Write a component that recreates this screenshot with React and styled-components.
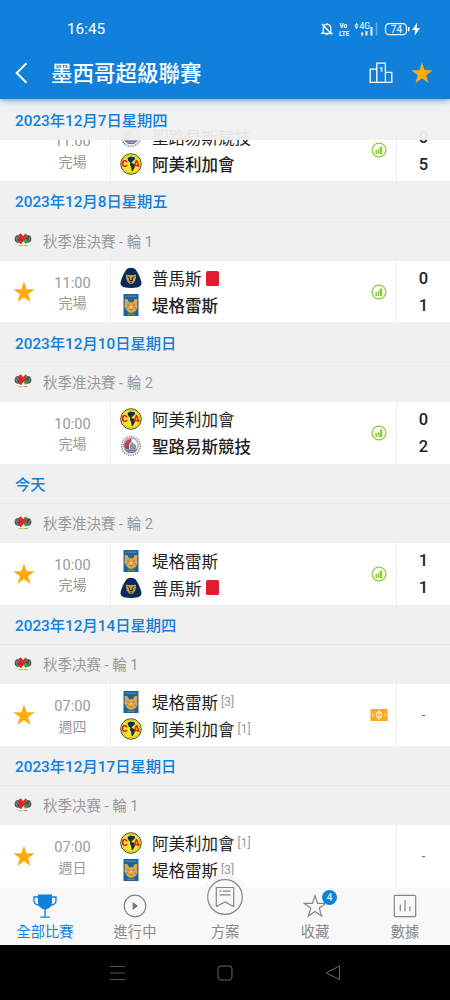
import React from 'react'
import styled, { createGlobalStyle } from 'styled-components'

const days = [
    {
        id: 1, title: '2023年12月8日星期五', league: '秋季准決賽 - 輪 1',
        match: { star: true, time: '11:00', state: '完場', stats: true,
            teams: [{ crest: 'pumas', name: '普馬斯', red: true, score: 0 }, { crest: 'tigres', name: '堤格雷斯', win: true, score: 1 }] }
    },
    {
        id: 2, title: '2023年12月10日星期日', league: '秋季准決賽 - 輪 2',
        match: { time: '10:00', state: '完場', stats: true,
            teams: [{ crest: 'america', name: '阿美利加會', score: 0 }, { crest: 'sanluis', name: '聖路易斯競技', win: true, score: 2 }] }
    },
    {
        id: 3, title: '今天', league: '秋季准決賽 - 輪 2',
        match: { star: true, time: '10:00', state: '完場', stats: true,
            teams: [{ crest: 'tigres', name: '堤格雷斯', score: 1 }, { crest: 'pumas', name: '普馬斯', red: true, score: 1 }] }
    },
    {
        id: 4, title: '2023年12月14日星期四', league: '秋季决赛 - 輪 1',
        match: { star: true, time: '07:00', state: '週四', preview: true,
            teams: [{ crest: 'tigres', name: '堤格雷斯', rank: 3 }, { crest: 'america', name: '阿美利加會', rank: 1 }] }
    },
    {
        id: 5, title: '2023年12月17日星期日', league: '秋季决赛 - 輪 1',
        match: { star: true, time: '07:00', state: '週日',
            teams: [{ crest: 'america', name: '阿美利加會', rank: 1 }, { crest: 'tigres', name: '堤格雷斯', rank: 3 }] }
    },
]

const firstMatch = { time: '11:00', state: '完場', stats: true,
    teams: [{ crest: 'sanluis', name: '聖路易斯競技', score: 0 }, { crest: 'america', name: '阿美利加會', win: true, score: 5 }] }

function Star({ size }) {
    return (
        <svg width={size} height={size} viewBox="0 0 22 22">
            <path fill="#ffab0f" d="M11 .6l2.6 7.6 8 .1-6.4 4.900 2.300 7.700L11 16.300l-6.500 4.600 2.300-7.700L.4 8.300l8-.1z" />
        </svg>
    )
}

function Crest({ kind }) {
    if (kind === 'pumas') {
        return (
            <svg width="22" height="22" viewBox="0 0 22 22">
                <path fill="#08295a" d="M11 .8c2.700 0 4.300 1.200 5.600 3.200 1.900 3 3.500 6.500 4.600 10.200.9 3-.4 5.300-3.200 6-4.600 1-9.400 1-14 0-2.800-.7-4.100-3-3.200-6C1.900 10.500 3.500 7 5.400 4 6.700 2 8.300.8 11 .8z" />
                <path fill="#c9a13b" d="M6.200 7.600l2.300.5h5l2.300-.5.2 3-1 3.500-2.300 2.600h-3.400L7 14.100l-1-3.500z" />
                <path fill="none" stroke="#08295a" strokeWidth="1" d="M7.600 9.700l2 1.200v2.600h2.800v-2.600l2-1.200M9.800 15.200h2.400" />
            </svg>
        )
    }
    if (kind === 'tigres') {
        return (
            <svg width="22" height="22" viewBox="0 0 22 22">
                <rect x="3.500" width="15" height="22" fill="#17649f" />
                <path stroke="#5d8aa0" strokeWidth="1.600" strokeDasharray="1.600 .7" d="M5.200 2.300h12" />
                <path fill="#e9a541" d="M4.600 5l3 .2 1.200 3h4.400l1.200-3 3-.2-.3 5.400.6 2.800-1.700 3.600-3.200 1.900H9.200L6 15.800l-1.700-3.600.6-2.800z" />
                <path fill="none" stroke="#17649f" strokeWidth=".6" d="M7 10.500l2.500 1.200M15 10.500l-2.500 1.200M5.500 14.300l2.200-.3M16.500 14.300l-2.200-.3M9.400 15.400q1.600 1.400 3.200 0" />
                <path fill="#f6dba0" d="M9.500 12.200h3L11 14.500z" />
                <path stroke="#b8a765" strokeWidth="1" strokeDasharray="1.300 .6" d="M7.500 20.300h7" />
            </svg>
        )
    }
    if (kind === 'america') {
        return (
            <svg width="22" height="22" viewBox="0 0 22 22">
                <circle cx="11" cy="11" r="10.300" fill="#f5e625" stroke="#4c552f" strokeWidth="1" />
                <circle cx="11" cy="11" r="8.800" fill="none" stroke="#b9b52f" strokeWidth=".5" />
                <path fill="#0b3155" d="M7.500 5l2.800-1.500 4.300.7.500 1.900-2.400 2.100-1.300 1.800 1.900.6 1.900 1.600-.6 2.300-1.900 3.700-1-.4-.6-3.700-1.200-2.400.5-1.800L8.400 8z" />
                <CrestText x="1.500" y="14.200">C</CrestText>
                <CrestText x="13.300" y="14.200">A</CrestText>
            </svg>
        )
    }
    return (
        <svg width="22" height="22" viewBox="0 0 22 22">
            <circle cx="11" cy="11" r="9.300" fill="#fff" stroke="#8a8fab" strokeWidth="1.700" strokeDasharray="1.300 1" />
            <circle cx="11" cy="10.500" r="7.300" fill="#fff" stroke="#8b5a72" strokeWidth=".8" />
            <path fill="#b7454c" d="M4.300 12A6.800 6.800 0 0 1 11.500 4v2.500L9.300 9v5H5.500z" />
            <path fill="#8b93b3" d="M12 6.300l1.500 2.500 2.200.8.900 4.400H10v-4z" />
            <path stroke="#3d4b7d" strokeWidth="1.200" d="M5.500 15.200h11M7.500 17h7" />
        </svg>
    )
}

function LeagueLogo() {
    return (
        <svg width="18" height="16" viewBox="0 0 18 16">
            <circle cx="4.500" cy="6.800" r="3.900" fill="#505050" />
            <circle cx="13.500" cy="6.800" r="3.900" fill="#505050" />
            <path stroke="#aaa" strokeWidth=".7" d="M1.500 4.500l2 5M3.500 4l1 3M16.500 4.500l-2 5" />
            <path stroke="#23ad46" strokeWidth="3.400" d="M12.700 2.400L9.600 6.300l3.200 4.600" fill="none" />
            <path stroke="#ee2229" strokeWidth="3.600" d="M5.300 2.400l3.800 4.200-3.600 4.400" fill="none" />
            <path stroke="#ee2229" strokeWidth="2.400" d="M7.500 8.800l4.500-5.600" />
            <path stroke="#b9cc37" strokeWidth="1" d="M4.500 13.600h5" />
            <path stroke="#e78b84" strokeWidth="1" d="M10 13.600h4" />
        </svg>
    )
}

function Match({ data, first }) {
    return (
        <MatchRow $first={first}>
            <StarCell>{data.star && <Star size={22} />}</StarCell>
            <TimeCell>
                <Time>{data.time}</Time>
                <State>{data.state}</State>
            </TimeCell>
            <Teams>
                {data.teams.map((team) => (
                    <Team key={team.crest} $win={team.win}>
                        <Crest kind={team.crest} />
                        <span>{team.name}</span>
                        {team.red && <RedCard />}
                        {team.rank && <Rank>[{team.rank}]</Rank>}
                    </Team>
                ))}
            </Teams>
            <Extra>
                {data.stats && (
                    <svg width="16" height="16" viewBox="0 0 16 16">
                        <circle cx="8" cy="8" r="6.900" fill="none" stroke="#8ccb3c" strokeWidth="1.300" />
                        <path fill="#8ccb3c" d="M4.400 8h1.900v4H4.400zM7 6.800h1.500V12H7zM9 4.500h2.300V12H9z" />
                    </svg>
                )}
                {data.preview && (
                    <svg width="18" height="14" viewBox="0 0 18 14">
                        <rect x=".5" y="1" width="17" height="12" rx=".8" fill="#fba81a" />
                        <ellipse cx="9" cy="7" rx="2.700" ry="2.900" fill="none" stroke="#fff3d6" strokeWidth="1.200" />
                        <path stroke="#fff3d6" strokeWidth="1" d="M9 2v10M2.800 5.200v3.600M15.200 5.200v3.600" />
                    </svg>
                )}
            </Extra>
            <Scores>
                {data.teams[0].score === undefined ? <Dash>-</Dash> : data.teams.map((team) => <Score key={team.crest}>{team.score}</Score>)}
            </Scores>
        </MatchRow>
    )
}

function StatusBar() {
    return (
        <Status>
            <Clock>16:45</Clock>
            <svg width="104" height="16" viewBox="0 0 104 16" fill="none" stroke="#fff">
                <path strokeWidth="1.200" d="M3.200 11V7.300C3.200 4.800 4.700 3.300 7 3.300s3.800 1.500 3.800 4V11l1 1.300H2zM7 2v1.300M5.700 13.500h2.600M2 3l10 10.500" />
                {/* VoLTE mark, two lines */}
                <SignalText x="19.500" y="7">Vo</SignalText>
                <SignalText x="19" y="14.500" textLength="10.500" lengthAdjust="spacingAndGlyphs">LTE</SignalText>
                <path fill="#fff" stroke="none" d="M36.500 2l1.900 2.400h-3.800zM36.500 8l1.900-2.400h-3.800z" />
                <SignalText x="39.500" y="7.800" $thin>4G</SignalText>
                <path strokeWidth="1.900" d="M42.200 11.500v3M46.500 10v4.500M51.500 6v8.500" />
                <path strokeWidth="1.500" opacity=".35" d="M56.500 1.500v13" />
                <rect x="65.500" y="2.600" width="21" height="11" rx="3.700" strokeWidth="1.200" />
                <path strokeWidth="1.600" d="M88.700 6v4.300" />
                <SignalText x="70.800" y="11.600" $battery>74</SignalText>
                <path fill="#fff" stroke="none" d="M97.300 1.500L92 9h3.300l-.7 5.800L100 7h-3.400z" />
            </svg>
        </Status>
    )
}

function App() {
    return (
        <Phone>
            <GlobalStyle />
            <Top>
                <StatusBar />
                <TitleBar>
                    <svg width="14" height="22" viewBox="0 0 14 22">
                        <path fill="none" stroke="#fff" strokeWidth="1.900" d="M12.500 1.300L2.700 11l9.800 9.700" />
                    </svg>
                    <h1>墨西哥超級聯賽</h1>
                    <svg width="24" height="22" viewBox="0 0 24 22" fill="none" stroke="#fff" strokeWidth="1.300">
                        <path d="M7.800 20.300V1.200h8.600v19.100M7.800 7.200H1.200v13.100h21.600V10.300h-6.400" />
                        <PodiumText x="10" y="9.700">1</PodiumText>
                    </svg>
                    <Star size={22} />
                </TitleBar>
            </Top>

            <List>
                <DateBar $sticky>2023年12月7日星期四</DateBar>
                <Match data={firstMatch} first />
                {days.map((day) => (
                    <section key={day.id}>
                        <DateBar>{day.title}</DateBar>
                        <League>
                            <LeagueLogo />
                            {day.league}
                        </League>
                        <Match data={day.match} />
                    </section>
                ))}
            </List>

            <Tabs>
                <Tab $active>
                    <TabIcon>
                        <svg width="24" height="26" viewBox="0 0 24 26">
                            <path fill="#1180db" d="M5 1.500h14V9c0 4.300-3 7.300-7 7.300S5 13.300 5 9z" />
                            <path fill="none" stroke="#1180db" strokeWidth="1.300" d="M5 4H1v3.500c0 2.600 1.600 4.200 5 4.500M19 4h4v3.500c0 2.600-1.600 4.200-5 4.500M12 16v8M7.300 24.200h9.400" />
                        </svg>
                    </TabIcon>
                    全部比賽
                </Tab>
                <Tab>
                    <TabIcon>
                        <svg width="24" height="24" viewBox="0 0 24 24">
                            <circle cx="12" cy="12" r="10.800" fill="none" stroke="#858585" strokeWidth="1.200" />
                            <path fill="#777" d="M9.700 8l5.300 4-5.300 4z" />
                        </svg>
                    </TabIcon>
                    進行中
                </Tab>
                <Tab>
                    <TabIcon>
                        <Bump>
                            <svg width="38" height="38" viewBox="0 0 38 38" fill="none" stroke="#858585" strokeWidth="1.200">
                                <circle cx="19" cy="19" r="17.300" />
                                <path d="M10.300 9.500h17.400v19L19 24l-8.700 4.500zM13.500 13.200h2.200M17 13.200h7.500M13.500 16.800h11" />
                            </svg>
                        </Bump>
                    </TabIcon>
                    方案
                </Tab>
                <Tab>
                    <TabIcon>
                        <svg width="24" height="24" viewBox="0 0 24 24">
                            <path fill="none" stroke="#858585" strokeWidth="1.200" d="M12 1.800l2.600 7.500 8.100.1-6.500 4.900 2.400 7.800-6.600-4.700-6.600 4.700 2.400-7.800-6.500-4.900 8.100-.1z" />
                        </svg>
                        <Badge>4</Badge>
                    </TabIcon>
                    收藏
                </Tab>
                <Tab>
                    <TabIcon>
                        <svg width="24" height="24" viewBox="0 0 24 24" fill="none" stroke="#858585" strokeWidth="1.200">
                            <rect x="1.300" y="1.300" width="21.400" height="21.400" rx="1" />
                            <path d="M7.300 10.500v6.700M12 6v11.200M16.900 12.500v4.700" />
                        </svg>
                    </TabIcon>
                    數據
                </Tab>
            </Tabs>

            <SystemNav>
                <svg width="18" height="16" viewBox="0 0 18 16"><path stroke="#555" d="M2 1.500h15M2 8h15M2 14.500h15" /></svg>
                <svg width="18" height="18" viewBox="0 0 18 18"><rect x="2" y="2" width="14" height="14" rx="3" fill="none" stroke="#666" /></svg>
                <svg width="18" height="18" viewBox="0 0 18 18"><path fill="none" stroke="#666" strokeLinejoin="round" d="M15.500 2v13.500L2 8.800z" /></svg>
            </SystemNav>
        </Phone>
    )
}

export default App

const GlobalStyle = createGlobalStyle`
    *{
        box-sizing: border-box;
    }
    body{
        margin: 0;
        background: #000;
        font-family: Roboto, 'Noto Sans CJK TC', sans-serif;
    }
    svg{
        display: block;
        flex-shrink: 0;
    }
`

const Phone = styled.div`
    width: 450px;
    height: 1000px;
    display: flex;
    flex-direction: column;
    overflow: hidden;
`

const Top = styled.header`
    height: 99px;
    flex-shrink: 0;
    background: #1180db;
    box-shadow: 0 1px 6px rgba(17, 128, 219, 0.75);
    position: relative;
    z-index: 5;
`

const Status = styled.div`
    height: 50px;
    padding: 8px 26px 0 67px;
    display: flex;
    justify-content: space-between;
    align-items: center;
`

const Clock = styled.span`
    color: #fff;
    font-size: 15.3px;
`

const SignalText = styled.text`
    font-family: Roboto, sans-serif;
    font-size: ${(p) => (p.$battery ? '10px' : p.$thin ? '8.5px' : '6.5px')};
    font-weight: ${(p) => (p.$battery || p.$thin ? 400 : 700)};
    fill: #fff;
    stroke: none;
`

const PodiumText = styled.text`
    font-family: Roboto, sans-serif;
    font-size: 7.5px;
    font-weight: 700;
    fill: #fff;
    stroke: none;
`

const CrestText = styled.text`
    font-family: Roboto, sans-serif;
    font-size: 9.5px;
    font-weight: 900;
    fill: #d51c2c;
`

const TitleBar = styled.div`
    height: 46px;
    display: flex;
    align-items: center;
    padding: 0 17px 0 14px;
    h1{
        flex: 1;
        margin: 0 0 0 23px;
        padding-top: 2px;
        color: #fff;
        font-size: 21.5px;
        font-weight: 500;
        line-height: 30px;
    }
    svg + svg{
        margin-left: 18px;
    }
`

const List = styled.main`
    flex: 1;
    min-height: 0;
    overflow: hidden;
    background: #f0f0f0;
`

const DateBar = styled.div`
    height: ${(p) => (p.$sticky ? '41px' : '40.3px')};
    padding: 0 0 1px 15px;
    display: flex;
    align-items: center;
    color: #1180db;
    font-size: 15.3px;
    font-weight: 500;
    border-bottom: 1px solid ${(p) => (p.$sticky ? 'transparent' : '#e9e9e9')};
    ${(p) => p.$sticky && `
        position: relative;
        z-index: 2;
        background: rgba(240, 240, 240, 0.95);
    `}
`

const League = styled.div`
    height: 39.2px;
    padding: 0 0 2px 14px;
    display: flex;
    align-items: center;
    gap: 11px;
    color: #999;
    font-size: 14.5px;
`

const MatchRow = styled.div`
    height: 61.7px;
    margin-top: ${(p) => (p.$first ? '-20.4px' : '0')};
    display: flex;
    background: #fff;
`

const StarCell = styled.div`
    width: 48px;
    display: flex;
    justify-content: center;
    align-items: center;
`

const TimeCell = styled.div`
    width: 49px;
    margin-right: 13px;
    padding-top: 3px;
    display: flex;
    flex-direction: column;
    justify-content: center;
    align-items: center;
    color: #999;
    line-height: 20.5px;
`

const Time = styled.span`
    font-size: 14.6px;
`

const State = styled.span`
    font-size: 14px;
`

const Teams = styled.div`
    flex: 1;
    padding: 4px 0 0 9px;
    border-left: 1px solid #eee;
`

const Team = styled.div`
    height: 27px;
    display: flex;
    align-items: center;
    color: #222;
    font-size: 16.5px;
    font-weight: ${(p) => (p.$win ? 500 : 400)};
    span{
        white-space: nowrap;
    }
    svg{
        margin-right: 10px;
    }
`

const RedCard = styled.i`
    width: 13px;
    height: 15px;
    margin-left: 4.5px;
    border-radius: 1.5px;
    background: #e01c32;
`

const Rank = styled.span`
    margin-left: 3px;
    color: #999;
    font-size: 12px;
`

const Extra = styled.div`
    width: 33px;
    padding-right: 1px;
    display: flex;
    justify-content: center;
    align-items: center;
`

const Scores = styled.div`
    width: 54px;
    border-left: 1px solid #eee;
    display: flex;
    flex-direction: column;
    padding-top: 4px;
    align-items: center;
`

const Score = styled.span`
    height: 27px;
    line-height: 27px;
    color: #222;
    font-size: 16.5px;
    font-weight: 500;
`

const Dash = styled.span`
    margin: auto;
    padding-bottom: 4px;
    color: #777;
    font-size: 14px;
`

const Tabs = styled.nav`
    height: 58px;
    flex-shrink: 0;
    display: flex;
    background: #f8f8f8;
    z-index: 3;
`

const Tab = styled.div`
    flex: 1;
    display: flex;
    flex-direction: column;
    align-items: center;
    padding-top: 5px;
    color: ${(p) => (p.$active ? '#1180db' : '#8a8a8a')};
    font-size: 14.3px;
    line-height: 24px;
`

const TabIcon = styled.div`
    position: relative;
    width: 26px;
    height: 28px;
    display: flex;
    justify-content: center;
    align-items: center;
`

// raised round button that sticks out above the tab bar
const Bump = styled.div`
    position: absolute;
    top: -18px;
    left: -11px;
    width: 48px;
    height: 46px;
    border-radius: 50%;
    background: #f8f8f8;
    display: flex;
    justify-content: center;
    align-items: center;
`

const Badge = styled.span`
    position: absolute;
    top: -2px;
    left: 20px;
    width: 15px;
    height: 15px;
    border-radius: 50%;
    background: #1180db;
    color: #fff;
    font-size: 10px;
    line-height: 15px;
    text-align: center;
`

const SystemNav = styled.footer`
    height: 55px;
    flex-shrink: 0;
    display: flex;
    justify-content: center;
    align-items: center;
    gap: 90px;
    background: #000;
`
